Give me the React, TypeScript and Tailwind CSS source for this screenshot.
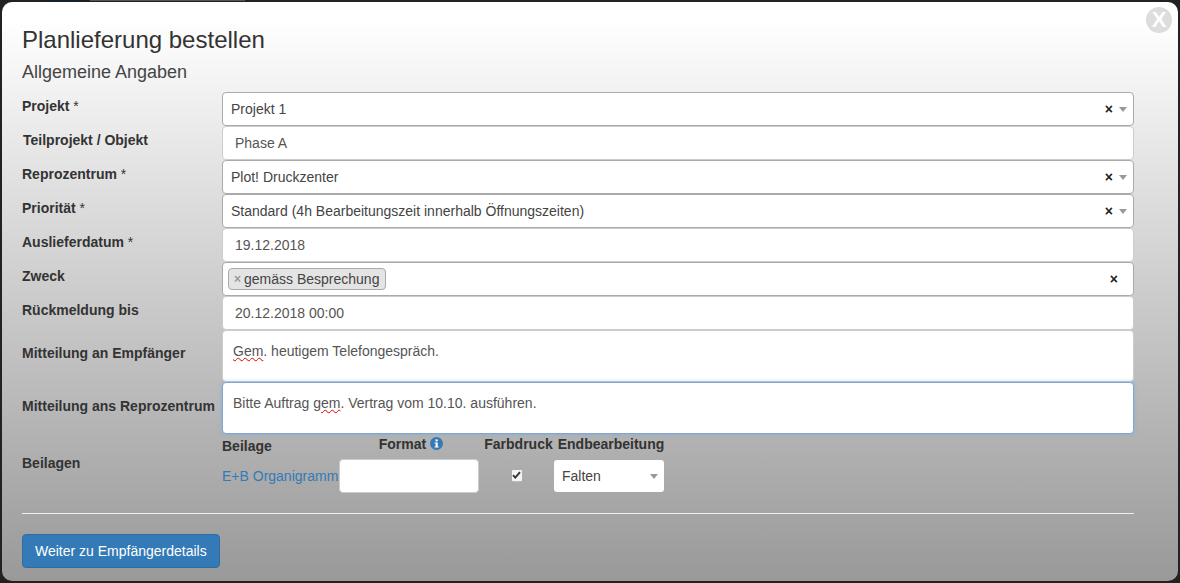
import React from "react";

const font = { fontFamily: '"Liberation Sans", Arial, sans-serif' };

function Clear({ className = "" }: { className?: string }) {
  return <span className={"font-bold text-[14px] leading-none text-[#222] " + className}>×</span>;
}
function Caret() {
  return <span className="ml-[6px] h-0 w-0 border-x-[4px] border-t-[5px] border-x-transparent border-t-[#999]" />;
}
function Sel({ text }: { text: string }) {
  return (
    <div className="flex h-[34px] items-center rounded-[4px] border border-[#aaa] bg-white pl-[8px] pr-[6px] text-[14px] text-[#444]">
      <span className="flex-1 truncate">{text}</span>
      <Clear />
      <Caret />
    </div>
  );
}
function Inp({ text }: { text: string }) {
  return (
    <div className="flex h-[34px] items-center rounded-[4px] border border-[#ccc] bg-white px-[12px] text-[14px] text-[#555]">
      {text}
    </div>
  );
}
function Star() {
  return <span className="font-normal"> *</span>;
}
function Row({ label, children, top = "pt-[4px]", lx = "", star = false }: { label: string; children: React.ReactNode; top?: string; lx?: string; star?: boolean }) {
  return (
    <div className="flex">
      <div className={"w-[200px] shrink-0 text-[14px] font-bold leading-[20px] text-[#333] " + top + " " + lx}>
        {label}
        {star ? <Star /> : null}
      </div>
      <div className="w-[912px]">{children}</div>
    </div>
  );
}
function Spell({ children }: { children: string }) {
  return <span className="underline decoration-wavy decoration-[#d00] decoration-1">{children}</span>;
}

export default function App() {
  return (
    <div style={font} className="h-[583px] w-[1180px] overflow-hidden bg-[#222] px-[2px]">
      <div className="flex h-[2px] items-start gap-[5px] pl-[44px]">
        <div className="h-[1px] w-[39px] bg-[#0d2233]" />
        <div className="h-[1px] w-[155px] bg-[#555]" />
      </div>
      <div className="relative h-[579px] w-[1176px] rounded-[10px] bg-gradient-to-b from-white from-[3%] to-[#999] px-[20px] pt-[25px]">
        <button className="absolute right-[6px] top-[5px] flex h-[26px] w-[26px] items-center justify-center rounded-full bg-[#ddd] text-[22px] font-bold leading-none text-white">
          X
        </button>
        <h1 className="text-[24px] leading-[26px] text-[#333]">Planlieferung bestellen</h1>
        <h2 className="mt-[5px] text-[18px] leading-[28px] text-[#444]">Allgemeine Angaben</h2>
        <div className="mt-[6px] flex flex-col">
          <Row label="Projekt" star><Sel text="Projekt 1" /></Row>
          <Row label="Teilprojekt / Objekt" lx="pl-[1px]"><Inp text="Phase A" /></Row>
          <Row label="Reprozentrum" star><Sel text="Plot! Druckzenter" /></Row>
          <Row label="Priorität" star><Sel text="Standard (4h Bearbeitungszeit innerhalb Öffnungszeiten)" /></Row>
          <Row label="Auslieferdatum" star><Inp text="19.12.2018" /></Row>
          <Row label="Zweck">
            <div className="flex h-[34px] items-center rounded-[4px] border border-[#aaa] bg-white pl-[5px] pr-[15px] text-[14px] text-[#444]">
              <span className="flex h-[22px] flex-1 items-center">
                <span className="flex h-[22px] items-center rounded-[4px] border border-[#aaa] bg-[#e4e4e4] pl-[5px] pr-[6px]">
                  <span className="mr-[3px] text-[12px] font-bold leading-none text-[#999]">×</span>gemäss Besprechung
                </span>
              </span>
              <Clear />
            </div>
          </Row>
          <Row label="Rückmeldung bis"><Inp text="20.12.2018 00:00" /></Row>
          <Row label="Mitteilung an Empfänger" top="pt-[13px]">
            <div className="h-[52px] rounded-[4px] border border-[#ccc] bg-white px-[10px] py-[10px] text-[14px] leading-[20px] text-[#555]">
              <Spell>Gem</Spell>. heutigem Telefongespräch.
            </div>
          </Row>
          <Row label="Mitteilung ans Reprozentrum" top="pt-[14px]">
            <div className="h-[52px] rounded-[4px] border border-[#7fa5d0] bg-white px-[10px] py-[10px] text-[14px] leading-[20px] text-[#555] shadow-[0_0_4px_rgba(102,175,233,0.6)]">
              Bitte Auftrag <Spell>gem</Spell>. Vertrag vom 10.10. ausführen.
            </div>
          </Row>
          <div className="flex">
            <div className="w-[200px] shrink-0 pt-[19px] text-[14px] font-bold leading-[20px] text-[#333]">Beilagen</div>
            <div className="grid grid-cols-[117px_140px_75px_110px] grid-rows-[25px_34px] text-[14px]">
              <div className="mt-[2px] font-bold leading-[20px] text-[#333]">Beilage</div>
              <div className="flex h-[20px] items-center justify-center gap-[4px] pl-[4px] font-bold text-[#333]">
                Format
                <svg width="13" height="13" viewBox="0 0 13 13" className="-mt-[2px]">
                  <circle cx="6.5" cy="6.5" r="6.5" fill="#337ab7" />
                  <rect x="5.5" y="2.4" width="2.2" height="2" fill="#fff" />
                  <path d="M4.6 5.4h3.1v4h1v1.2H4.6V9.4h1V6.6h-1z" fill="#fff" />
                </svg>
              </div>
              <div className="flex h-[20px] items-center justify-center pl-[4px] font-bold text-[#333]">Farbdruck</div>
              <div className="flex h-[20px] items-center justify-center pl-[4px] font-bold whitespace-nowrap text-[#333]">Endbearbeitung</div>
              <div className="flex items-center whitespace-nowrap text-[#337ab7]">E+B Organigramm</div>
              <div className="h-[34px] rounded-[4px] border border-[#ccc] bg-white" />
              <div className="mb-[2px] flex items-center justify-center">
                <span className="flex h-[11px] w-[10px] items-center justify-center rounded-[1px] bg-[#f4f4f4] shadow-[0_1px_0_#bbb]">
                  <svg width="9" height="8" viewBox="0 0 9 8">
                    <path d="M1 4.2 3.3 6.6 8 1.2" fill="none" stroke="#333" strokeWidth="1.9" />
                  </svg>
                </span>
              </div>
              <div className="mt-[1px] flex h-[32px] w-[110px] items-center justify-between rounded-[3px] bg-white pl-[8px] pr-[6px] text-[#444]">
                Falten
                <span className="h-0 w-0 border-x-[4px] border-t-[5px] border-x-transparent border-t-[#999]" />
              </div>
            </div>
          </div>
        </div>
        <hr className="mt-[20px] w-[1112px] border-t border-[#eee]" />
        <button className="mt-[20px] h-[34px] rounded-[4px] border border-[#2e6da4] bg-[#337ab7] px-[12px] text-[14px] text-white">
          Weiter zu Empfängerdetails
        </button>
      </div>
    </div>
  );
}
